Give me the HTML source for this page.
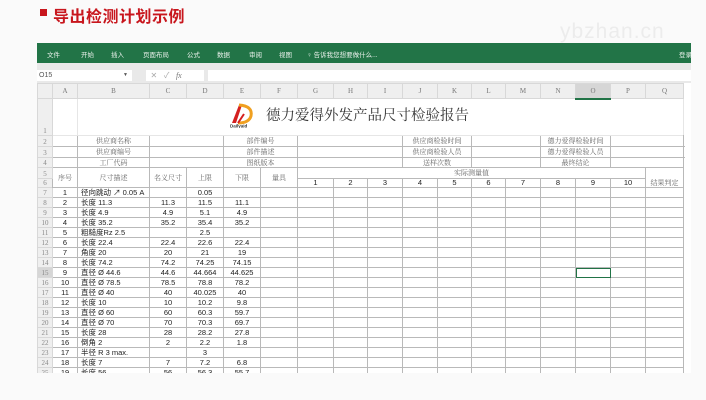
<!DOCTYPE html>
<html><head><meta charset="utf-8"><style>
body{margin:0;width:706px;height:400px;background:#fafafa;position:relative;overflow:hidden;font-family:"Liberation Sans","Noto Sans CJK SC",sans-serif}
.abs{position:absolute}
#title{left:53px;top:3px;font-size:16px;font-weight:bold;color:#c8161d;letter-spacing:0.5px}
#sq{left:40px;top:9px;width:7px;height:7px;background:#c8161d}
#wm{left:560px;top:20px;font-size:21px;color:#ececec;letter-spacing:1px}
#rib{left:37px;top:43px;width:654px;height:20px;background:#227447;color:#e8f0ea;font-size:6.5px}
#rib span{position:absolute;top:6px;white-space:nowrap}
#gbar{left:37px;top:63px;width:654px;height:20px;background:#e9e9e9}
.box{position:absolute;background:#fff;height:11px;top:70px}
#sheetwrap{left:37px;top:83px;width:654px;height:290px;overflow:hidden;background:#fff}
table{border-collapse:collapse;table-layout:fixed;width:646px;font-size:7.5px;color:#222}
td{padding:0;border:1px solid #b9b9b9;text-align:center;white-space:nowrap;overflow:hidden;line-height:8px}
td.h{background:#efefef;color:#777;border-color:#d8d8d8;font-family:"Liberation Serif","Noto Serif CJK SC",serif;font-size:7px}
td.rn{background:#efefef;color:#888;border-color:#d8d8d8;font-family:"Liberation Serif","Noto Serif CJK SC",serif;font-size:7px;vertical-align:bottom}
td.s{font-family:"Noto Serif CJK SC",serif;color:#666;font-size:7px}
td.l{text-align:left;padding-left:3px}
td.n{border-color:#e6e6e6}
tr.d td{height:9px}
</style></head><body>
<div class="abs" id="sq"></div>
<div class="abs" id="title">导出检测计划示例</div>
<div class="abs" id="wm">ybzhan.cn</div>
<div class="abs" id="rib">
<span style="left:10px">文件</span><span style="left:44px">开始</span><span style="left:74px">插入</span><span style="left:106px">页面布局</span><span style="left:150px">公式</span><span style="left:180px">数据</span><span style="left:212px">审阅</span><span style="left:242px">视图</span><span style="left:270px">♀ 告诉我您想要做什么...</span><span style="left:642px">登录</span>
</div>
<div class="abs" id="gbar"></div>
<div class="box" style="left:37px;width:93px;font-size:7px;color:#555;line-height:11px;padding-left:2px">O15<span style="position:absolute;right:4px;font-size:5px">▼</span></div>
<div class="box" style="left:146px;width:58px;font-size:8px;color:#aaa;line-height:11px">&nbsp;&nbsp;✕&nbsp;&nbsp;&nbsp;✓&nbsp;&nbsp;&nbsp;<i style="font-family:'Liberation Serif';color:#777">fx</i></div>
<div class="box" style="left:208px;width:483px"></div>
<div class="abs" style="left:683px;top:83px;width:8px;height:290px;background:#e6e6e6"></div>
<div class="abs" id="sheetwrap">
<table>
<colgroup><col style="width:15px"><col style="width:25px"><col style="width:72px"><col style="width:37px"><col style="width:37px"><col style="width:37px"><col style="width:37px"><col style="width:36px"><col style="width:34px"><col style="width:35px"><col style="width:35px"><col style="width:34px"><col style="width:34px"><col style="width:35px"><col style="width:35px"><col style="width:35px"><col style="width:35px"><col style="width:38px"></colgroup>
<tr style="height:15px"><td class="h"></td><td class="h">A</td><td class="h">B</td><td class="h">C</td><td class="h">D</td><td class="h">E</td><td class="h">F</td><td class="h">G</td><td class="h">H</td><td class="h">I</td><td class="h">J</td><td class="h">K</td><td class="h">L</td><td class="h">M</td><td class="h">N</td><td class="h" style="background:#d6d6d6;border-bottom:2px solid #217346">O</td><td class="h">P</td><td class="h">Q</td></tr>
<tr style="height:37px"><td class="rn">1</td><td class="n"></td><td colspan="16" class="n" style="position:relative;text-align:left">
<svg style="position:absolute;left:151px;top:2px" width="26" height="26" viewBox="0 0 26 26"><path d="M3 21 L10 3 L13 3 L7 21Z" fill="#d42020"/><path d="M10 3 Q24 4 22 14 Q20 21 9 21" fill="none" stroke="#f0a020" stroke-width="3"/><path d="M9 21 L15 12" stroke="#d42020" stroke-width="2"/><text x="1" y="25.5" font-size="4.5" font-weight="bold" fill="#333" font-family="Liberation Sans">Dailyaid</text></svg>
<span style="position:absolute;left:188px;top:12px;font-size:14.5px;color:#333;font-family:'Liberation Serif','Noto Serif CJK SC',serif">德力爱得外发产品尺寸检验报告</span></td></tr>
<tr style="height:11px"><td class="rn">2</td><td></td><td class="s">供应商名称</td><td colspan="2"></td><td colspan="2" class="s">部件编号</td><td colspan="3"></td><td colspan="2" class="s">供应商检验时间</td><td colspan="2"></td><td colspan="2" class="s">德力爱得检验时间</td><td colspan="3"></td></tr>
<tr style="height:11px"><td class="rn">3</td><td></td><td class="s">供应商编号</td><td colspan="2"></td><td colspan="2" class="s">部件描述</td><td colspan="3"></td><td colspan="2" class="s">供应商检验人员</td><td colspan="2"></td><td colspan="2" class="s">德力爱得检验人员</td><td colspan="3"></td></tr>
<tr style="height:10px"><td class="rn">4</td><td></td><td class="s">工厂代码</td><td colspan="2"></td><td colspan="2" class="s">图纸版本</td><td colspan="3"></td><td colspan="2" class="s">送样次数</td><td colspan="2"></td><td colspan="2" class="s">最终结论</td><td colspan="3"></td></tr>
<tr style="height:11px"><td class="rn">5</td><td rowspan="2" class="s">序号</td><td rowspan="2" class="s">尺寸描述</td><td rowspan="2" class="s">名义尺寸</td><td rowspan="2" class="s">上限</td><td rowspan="2" class="s">下限</td><td rowspan="2" class="s">量具</td><td colspan="10" class="s" style="border-bottom:1px solid #b9b9b9">实际测量值</td><td rowspan="2" class="s" style="vertical-align:bottom">结果判定</td></tr>
<tr style="height:9px"><td class="rn">6</td><td>1</td><td>2</td><td>3</td><td>4</td><td>5</td><td>6</td><td>7</td><td>8</td><td>9</td><td>10</td></tr>
<tr class="d"><td class="rn">7</td><td>1</td><td class="l">径向跳动 ↗ 0.05 A</td><td></td><td>0.05</td><td></td><td></td><td></td><td></td><td></td><td></td><td></td><td></td><td></td><td></td><td></td><td></td><td></td></tr>
<tr class="d"><td class="rn">8</td><td>2</td><td class="l">长度 11.3</td><td>11.3</td><td>11.5</td><td>11.1</td><td></td><td></td><td></td><td></td><td></td><td></td><td></td><td></td><td></td><td></td><td></td><td></td></tr>
<tr class="d"><td class="rn">9</td><td>3</td><td class="l">长度 4.9</td><td>4.9</td><td>5.1</td><td>4.9</td><td></td><td></td><td></td><td></td><td></td><td></td><td></td><td></td><td></td><td></td><td></td><td></td></tr>
<tr class="d"><td class="rn">10</td><td>4</td><td class="l">长度 35.2</td><td>35.2</td><td>35.4</td><td>35.2</td><td></td><td></td><td></td><td></td><td></td><td></td><td></td><td></td><td></td><td></td><td></td><td></td></tr>
<tr class="d"><td class="rn">11</td><td>5</td><td class="l">粗糙度Rz 2.5</td><td></td><td>2.5</td><td></td><td></td><td></td><td></td><td></td><td></td><td></td><td></td><td></td><td></td><td></td><td></td><td></td></tr>
<tr class="d"><td class="rn">12</td><td>6</td><td class="l">长度 22.4</td><td>22.4</td><td>22.6</td><td>22.4</td><td></td><td></td><td></td><td></td><td></td><td></td><td></td><td></td><td></td><td></td><td></td><td></td></tr>
<tr class="d"><td class="rn">13</td><td>7</td><td class="l">角度 20</td><td>20</td><td>21</td><td>19</td><td></td><td></td><td></td><td></td><td></td><td></td><td></td><td></td><td></td><td></td><td></td><td></td></tr>
<tr class="d"><td class="rn">14</td><td>8</td><td class="l">长度 74.2</td><td>74.2</td><td>74.25</td><td>74.15</td><td></td><td></td><td></td><td></td><td></td><td></td><td></td><td></td><td></td><td></td><td></td><td></td></tr>
<tr class="d"><td class="rn" style="background:#d6d6d6">15</td><td>9</td><td class="l">直径 Ø 44.6</td><td>44.6</td><td>44.664</td><td>44.625</td><td></td><td></td><td></td><td></td><td></td><td></td><td></td><td></td><td></td><td style="outline:1.5px solid #217346;outline-offset:-1px"></td><td></td><td></td></tr>
<tr class="d"><td class="rn">16</td><td>10</td><td class="l">直径 Ø 78.5</td><td>78.5</td><td>78.8</td><td>78.2</td><td></td><td></td><td></td><td></td><td></td><td></td><td></td><td></td><td></td><td></td><td></td><td></td></tr>
<tr class="d"><td class="rn">17</td><td>11</td><td class="l">直径 Ø 40</td><td>40</td><td>40.025</td><td>40</td><td></td><td></td><td></td><td></td><td></td><td></td><td></td><td></td><td></td><td></td><td></td><td></td></tr>
<tr class="d"><td class="rn">18</td><td>12</td><td class="l">长度 10</td><td>10</td><td>10.2</td><td>9.8</td><td></td><td></td><td></td><td></td><td></td><td></td><td></td><td></td><td></td><td></td><td></td><td></td></tr>
<tr class="d"><td class="rn">19</td><td>13</td><td class="l">直径 Ø 60</td><td>60</td><td>60.3</td><td>59.7</td><td></td><td></td><td></td><td></td><td></td><td></td><td></td><td></td><td></td><td></td><td></td><td></td></tr>
<tr class="d"><td class="rn">20</td><td>14</td><td class="l">直径 Ø 70</td><td>70</td><td>70.3</td><td>69.7</td><td></td><td></td><td></td><td></td><td></td><td></td><td></td><td></td><td></td><td></td><td></td><td></td></tr>
<tr class="d"><td class="rn">21</td><td>15</td><td class="l">长度 28</td><td>28</td><td>28.2</td><td>27.8</td><td></td><td></td><td></td><td></td><td></td><td></td><td></td><td></td><td></td><td></td><td></td><td></td></tr>
<tr class="d"><td class="rn">22</td><td>16</td><td class="l">倒角 2</td><td>2</td><td>2.2</td><td>1.8</td><td></td><td></td><td></td><td></td><td></td><td></td><td></td><td></td><td></td><td></td><td></td><td></td></tr>
<tr class="d"><td class="rn">23</td><td>17</td><td class="l">半径 R 3 max.</td><td></td><td>3</td><td></td><td></td><td></td><td></td><td></td><td></td><td></td><td></td><td></td><td></td><td></td><td></td><td></td></tr>
<tr class="d"><td class="rn">24</td><td>18</td><td class="l">长度 7</td><td>7</td><td>7.2</td><td>6.8</td><td></td><td></td><td></td><td></td><td></td><td></td><td></td><td></td><td></td><td></td><td></td><td></td></tr>
<tr class="d"><td class="rn">25</td><td>19</td><td class="l">长度 56</td><td>56</td><td>56.3</td><td>55.7</td><td></td><td></td><td></td><td></td><td></td><td></td><td></td><td></td><td></td><td></td><td></td><td></td></tr>
</table>
</div>
</body></html>
